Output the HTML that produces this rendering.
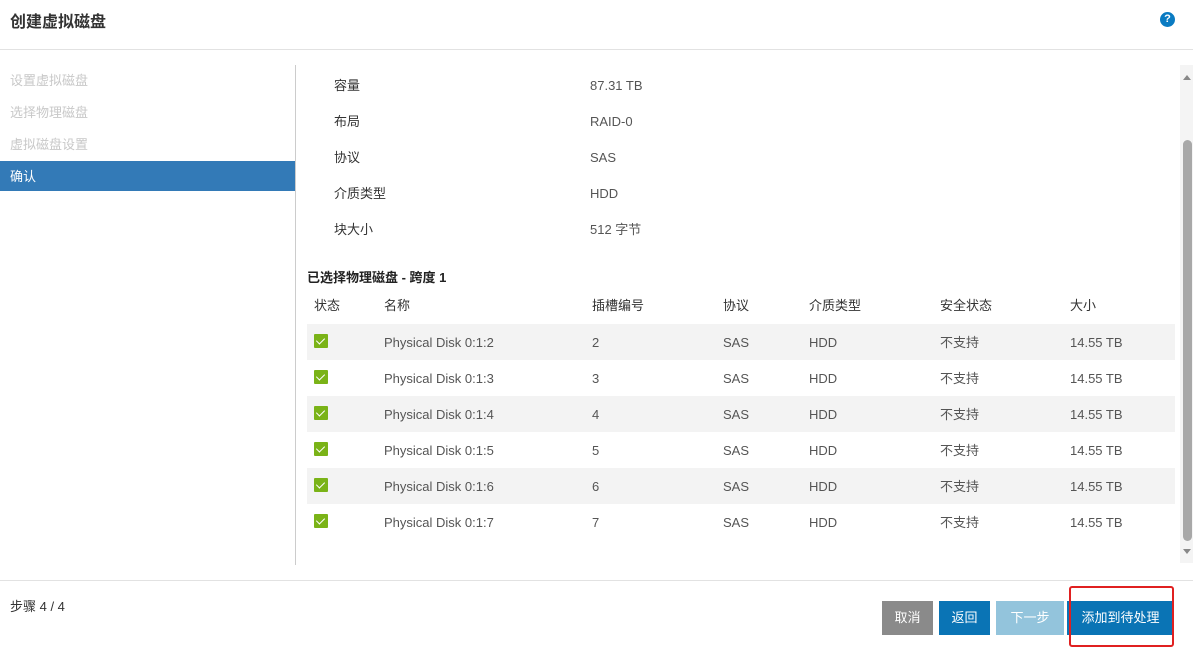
<!DOCTYPE html>
<html><head><meta charset="utf-8"><style>
body{margin:0;width:1193px;height:652px;background:#fff;font-family:"Liberation Sans","Noto Sans CJK SC",sans-serif;position:relative;overflow:hidden;color:#333}
.a{position:absolute;white-space:nowrap;line-height:18px}
.t{font-size:13px;color:#333}
.g{color:#555}
.btn{position:absolute;top:601px;height:34px;line-height:34px;color:#fff;font-size:13px;text-align:center}
.chk{position:absolute;left:314px;width:14px;height:14px;background:#7ab317;border-radius:1px}
.chk:after{content:"";position:absolute;left:4px;top:2px;width:4px;height:7px;border:solid #fff;border-width:0 1.5px 1.5px 0;transform:rotate(45deg)}
</style></head><body>
<div class="a" style="left:10px;top:14px;font-size:16px;color:#333;font-weight:bold">创建虚拟磁盘</div>
<div class="a" style="left:1160px;top:12px;width:15px;height:15px;border-radius:50%;background:#0a7bc2;color:#fff;font-size:11px;font-weight:bold;text-align:center;line-height:15px">?</div>
<div class="a" style="left:0;top:49px;width:1193px;height:1px;background:#e2e2e2"></div>
<div class="a t" style="left:10px;top:72px;color:#c8c8c8">设置虚拟磁盘</div>
<div class="a t" style="left:10px;top:104px;color:#c8c8c8">选择物理磁盘</div>
<div class="a t" style="left:10px;top:136px;color:#c8c8c8">虚拟磁盘设置</div>
<div class="a" style="left:0;top:161px;width:295px;height:30px;background:#337ab7"></div>
<div class="a t" style="left:10px;top:168px;color:#fff">确认</div>
<div class="a" style="left:295px;top:65px;width:1px;height:500px;background:#ccc"></div>

<div class="a t" style="left:334px;top:77px">容量</div><div class="a t g" style="left:590px;top:77px">87.31 TB</div>
<div class="a t" style="left:334px;top:113px">布局</div><div class="a t g" style="left:590px;top:113px">RAID-0</div>
<div class="a t" style="left:334px;top:149px">协议</div><div class="a t g" style="left:590px;top:149px">SAS</div>
<div class="a t" style="left:334px;top:185px">介质类型</div><div class="a t g" style="left:590px;top:185px">HDD</div>
<div class="a t" style="left:334px;top:221px">块大小</div><div class="a t g" style="left:590px;top:221px">512 字节</div>

<div class="a t" style="left:307px;top:269px;font-weight:bold;color:#222">已选择物理磁盘 - 跨度 1</div>
<div class="a t" style="left:314px;top:297px">状态</div>
<div class="a t" style="left:384px;top:297px">名称</div>
<div class="a t" style="left:592px;top:297px">插槽编号</div>
<div class="a t" style="left:723px;top:297px">协议</div>
<div class="a t" style="left:809px;top:297px">介质类型</div>
<div class="a t" style="left:940px;top:297px">安全状态</div>
<div class="a t" style="left:1070px;top:297px">大小</div>

<div class="a" style="left:307px;top:324px;width:868px;height:36px;background:#f3f3f3"></div>
<div class="a" style="left:307px;top:396px;width:868px;height:36px;background:#f3f3f3"></div>
<div class="a" style="left:307px;top:468px;width:868px;height:36px;background:#f3f3f3"></div>

<div id="rows"></div>
<script>
var h='';for(var i=0;i<6;i++){var y=334+i*36;
h+='<div class="chk" style="top:'+(y)+'px"></div>'+
'<div class="a t g" style="left:384px;top:'+y+'px">Physical Disk 0:1:'+(i+2)+'</div>'+
'<div class="a t g" style="left:592px;top:'+y+'px">'+(i+2)+'</div>'+
'<div class="a t g" style="left:723px;top:'+y+'px">SAS</div>'+
'<div class="a t g" style="left:809px;top:'+y+'px">HDD</div>'+
'<div class="a t g" style="left:940px;top:'+y+'px">不支持</div>'+
'<div class="a t g" style="left:1070px;top:'+y+'px">14.55 TB</div>';}
document.getElementById('rows').innerHTML=h;
</script>

<div class="a" style="left:1180px;top:65px;width:13px;height:498px;background:#f4f4f4"></div>
<div class="a" style="left:1183px;top:75px;width:0;height:0;border-left:4px solid transparent;border-right:4px solid transparent;border-bottom:5px solid #888"></div>
<div class="a" style="left:1183px;top:140px;width:9px;height:401px;background:#a8a8a8;border-radius:5px"></div>
<div class="a" style="left:1183px;top:549px;width:0;height:0;border-left:4px solid transparent;border-right:4px solid transparent;border-top:5px solid #888"></div>

<div class="a" style="left:0;top:580px;width:1193px;height:1px;background:#e2e2e2"></div>
<div class="a t" style="left:10px;top:598px">步骤 4 / 4</div>
<div class="btn" style="left:882px;width:51px;background:#8a8a8a">取消</div>
<div class="btn" style="left:939px;width:51px;background:#0a74b5">返回</div>
<div class="btn" style="left:996px;width:68px;background:#93c4dc">下一步</div>
<div class="btn" style="left:1067px;width:107px;background:#0a74b5">添加到待处理</div>
<div class="a" style="left:1069px;top:586px;width:101px;height:57px;border:2px solid #e02020;border-radius:3px"></div>
</body></html>
